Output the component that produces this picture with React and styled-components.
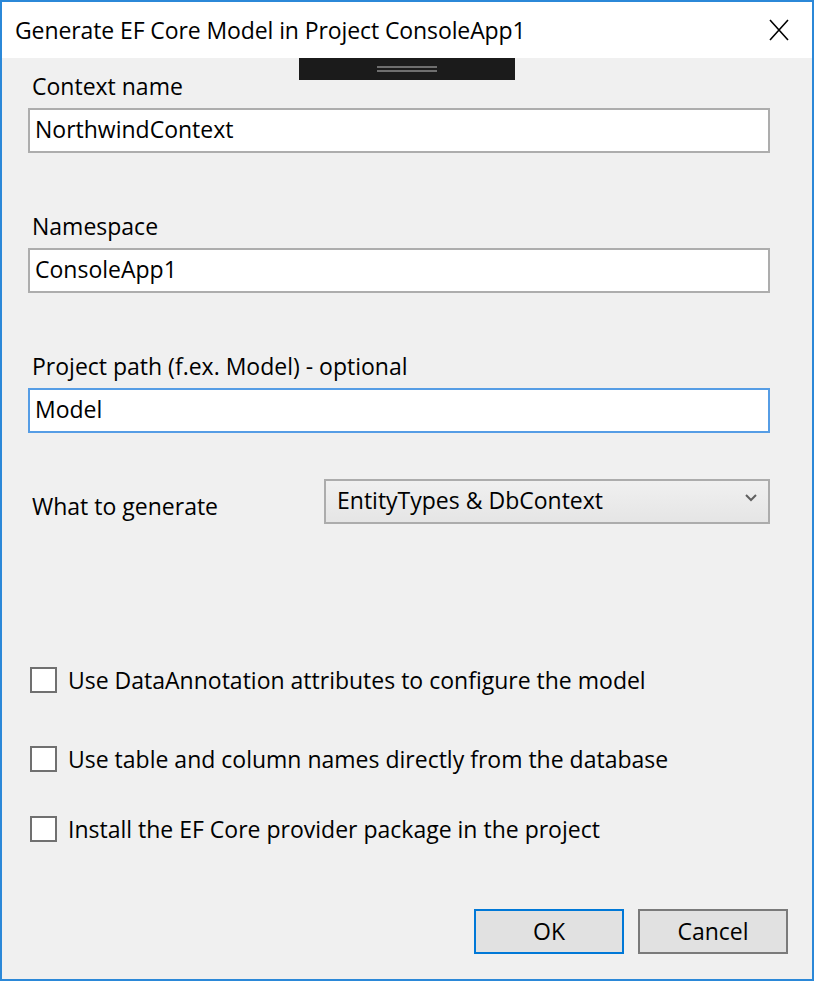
import styled, { createGlobalStyle } from 'styled-components';

const GlobalStyle = createGlobalStyle`
  html, body {
    margin: 0;
    padding: 0;
    background: #ffffff;
  }
  body {
    font-family: "Open Sans", "Noto Sans", sans-serif;
    color: #000000;
  }
  * {
    box-sizing: border-box;
  }
`;

const Window = styled.div`
  position: relative;
  width: 814px;
  height: 981px;
  border: 2px solid #2b88d8;
  background: #f0f0f0;
  display: flex;
  flex-direction: column;
`;

const TitleBar = styled.div`
  height: 56px;
  flex-shrink: 0;
  background: #ffffff;
  display: flex;
  align-items: center;
  justify-content: space-between;
  padding: 0 23px 0 13px;
`;

const Title = styled.div`
  font-size: 23px;
  letter-spacing: -0.1px;
  color: #000000;
`;

const CloseIcon = styled.svg`
  width: 20px;
  height: 22px;
  display: block;
`;

// VS xaml debug toolbar that floats over the window
const DebugBar = styled.div`
  position: absolute;
  top: 56px;
  left: 297px;
  width: 216px;
  height: 22px;
  background: #1b1b1b;
  display: flex;
  flex-direction: column;
  align-items: center;
  justify-content: center;
  gap: 2px;
`;

const Grip = styled.div`
  width: 60px;
  height: 2px;
  background: #6e6e6e;
`;

const Body = styled.div`
  flex: 1;
  display: flex;
  flex-direction: column;
  padding: 12px 24px 0 26px;
`;

const Form = styled.div`
  display: flex;
  flex-direction: column;
  padding-right: 18px;
`;

const Field = styled.div`
  display: flex;
  flex-direction: column;
  margin-bottom: ${(p) => p.$gap || 56}px;
`;

const Label = styled.label`
  font-size: 23px;
  line-height: 32px;
  padding-left: 4px;
  margin-bottom: 6px;
`;

const TextBox = styled.input`
  height: 45px;
  width: 100%;
  border: 2px solid ${(p) => (p.$focused ? '#569de5' : '#adadad')};
  background: #ffffff;
  padding: 0 5px 4px;
  font-family: "Open Sans", "Noto Sans", sans-serif;
  font-size: 23px;
  color: #000000;
  outline: none;
`;

const GenerateRow = styled.div`
  display: flex;
  align-items: center;
`;

const RowLabel = styled.div`
  width: 296px;
  font-size: 23px;
  padding: 9px 0 0 4px;
`;

const Combo = styled.div`
  flex: 1;
  height: 45px;
  border: 2px solid #acacac;
  background: linear-gradient(#f0f0f0, #e5e5e5);
  display: flex;
  align-items: center;
  justify-content: space-between;
  padding: 0 11px 3px 11px;
  font-size: 23px;
`;

const Chevron = styled.svg`
  width: 12px;
  height: 8px;
  display: block;
  margin-top: -4px;
`;

const Checks = styled.div`
  display: flex;
  flex-direction: column;
  margin-top: 143px;
`;

const CheckRow = styled.div`
  display: flex;
  align-items: center;
  gap: 11px;
  padding-left: 2px;
  margin-bottom: ${(p) => p.$gap || 0}px;
`;

const Box = styled.span`
  width: 27px;
  height: 26px;
  border: 2px solid #707070;
  background: #ffffff;
  flex-shrink: 0;
`;

const CheckText = styled.span`
  font-size: 23px;
  line-height: 26px;
`;

const Buttons = styled.div`
  display: flex;
  justify-content: flex-end;
  gap: 14px;
  margin-top: auto;
  margin-bottom: 25px;
`;

const Button = styled.button`
  width: 150px;
  height: 45px;
  background: #e1e1e1;
  border: 2px solid ${(p) => (p.$primary ? '#0078d7' : '#7a7a7a')};
  font-family: "Open Sans", "Noto Sans", sans-serif;
  font-size: 23px;
  color: #000000;
  padding: 0 0 2px;
`;

function App() {
  return (
    <>
      <GlobalStyle />
      <Window>
        <TitleBar>
          <Title>Generate EF Core Model in Project ConsoleApp1</Title>
          <CloseIcon viewBox="0 0 20 22">
            <path d="M1 1 L19 21 M19 1 L1 21" stroke="#000" strokeWidth="1.6" fill="none" />
          </CloseIcon>
        </TitleBar>
        <DebugBar>
          <Grip />
          <Grip />
        </DebugBar>
        <Body>
          <Form>
            <Field $gap={57}>
              <Label>Context name</Label>
              <TextBox defaultValue="NorthwindContext" />
            </Field>
            <Field $gap={57}>
              <Label>Namespace</Label>
              <TextBox defaultValue="ConsoleApp1" />
            </Field>
            <Field $gap={46}>
              <Label>Project path (f.ex. Model) - optional</Label>
              <TextBox $focused defaultValue="Model" />
            </Field>
            <GenerateRow>
              <RowLabel>What to generate</RowLabel>
              <Combo>
                <span>EntityTypes &amp; DbContext</span>
                <Chevron viewBox="0 0 12 8">
                  <path d="M1 1 L6 6 L11 1" stroke="#606060" strokeWidth="2" fill="none" />
                </Chevron>
              </Combo>
            </GenerateRow>
          </Form>
          <Checks>
            <CheckRow $gap={53}>
              <Box />
              <CheckText>Use DataAnnotation attributes to configure the model</CheckText>
            </CheckRow>
            <CheckRow $gap={44}>
              <Box />
              <CheckText>Use table and column names directly from the database</CheckText>
            </CheckRow>
            <CheckRow>
              <Box />
              <CheckText>Install the EF Core provider package in the project</CheckText>
            </CheckRow>
          </Checks>
          <Buttons>
            <Button $primary>OK</Button>
            <Button>Cancel</Button>
          </Buttons>
        </Body>
      </Window>
    </>
  );
}

export default App;
